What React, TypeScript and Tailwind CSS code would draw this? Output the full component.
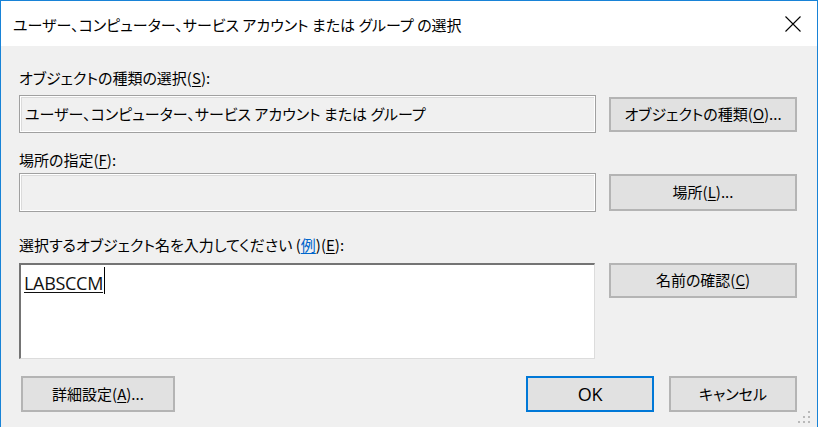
import React from "react";

const font = "font-['Noto_Sans_CJK_JP','Noto_Sans',sans-serif] [font-feature-settings:'palt']";

function Btn({ children, className = "" }: { children: React.ReactNode; className?: string }) {
  return (
    <div
      className={`flex items-center justify-center bg-[#e1e1e1] border-2 border-[#b4b4b4] text-[15px] text-black ${className}`}
    >
      {children}
    </div>
  );
}

function U({ children }: { children: React.ReactNode }) {
  return <span className="underline underline-offset-2">{children}</span>;
}

export default function App() {
  return (
    <div className={`relative w-[818px] h-[427px] flex flex-col border-l border-t border-r border-[#1883d7] bg-[#f0f0f0] overflow-hidden ${font}`}>
      {/* Title bar */}
      <div className="h-[45px] shrink-0 bg-white flex items-center justify-between pl-[12px] pr-[16px]">
        <div className="text-[15px] text-black leading-none pt-[2px]">
          ユーザー、コンピューター、サービス アカウント または グループ の選択
        </div>
        <svg width="16" height="16" viewBox="0 0 16 16" className="mt-[1px]">
          <path d="M0.5 0.5 L15.5 15.5 M15.5 0.5 L0.5 15.5" stroke="#000" strokeWidth="1.1" fill="none" />
        </svg>
      </div>

      {/* Body */}
      <div className="flex flex-col pl-[18px] pr-[20px] pt-[22px] text-[15px] text-black">
        <div className="h-[20px] leading-[20px]">
          オブジェクトの種類の選択(<U>S</U>):
        </div>
        <div className="mt-[7px] flex items-center gap-[13px]">
          <div className="w-[577px] h-[38px] border border-[#a0a0a0] shadow-[inset_0_0_0_1px_#ffffff,inset_1px_1px_0_1px_#dadada] bg-[#f0f0f0] flex items-center pl-[5px]">
            ユーザー、コンピューター、サービス アカウント または グループ
          </div>
          <Btn className="w-[188px] h-[35px]">
            オブジェクトの種類(<U>O</U>)...
          </Btn>
        </div>

        <div className="mt-[17px] h-[20px] leading-[20px]">
          場所の指定(<U>F</U>):
        </div>
        <div className="mt-[3px] flex items-center gap-[13px]">
          <div className="w-[577px] h-[39px] border border-[#a0a0a0] shadow-[inset_0_0_0_1px_#ffffff,inset_1px_1px_0_1px_#dadada] bg-[#f0f0f0]" />
          <Btn className="w-[188px] h-[37px]">
            場所(<U>L</U>)...
          </Btn>
        </div>

        <div className="mt-[23px] h-[20px] leading-[20px]">
          選択するオブジェクト名を入力してください (<span className="text-[#0066cc] underline underline-offset-2">例</span>)(<U>E</U>):
        </div>
        <div className="mt-[8px] flex items-start gap-[14px]">
          <div className="w-[576px] h-[96px] bg-white border-2 border-t-[#747474] border-l-[#747474] border-r-[#dcdcdc] border-b-[#dcdcdc] border-r border-b pl-[3px] pt-[7px]">
            <div className="flex items-end">
              <span className="font-['Open_Sans','Noto_Sans',sans-serif] text-[18px] leading-[22px] underline underline-offset-[2px] decoration-1 tracking-[-0.3px] text-[#111]">
                LABSCCM
              </span>
              <span className="w-px h-[27px] bg-black ml-px -mt-[5px]" />
            </div>
          </div>
          <Btn className="w-[188px] h-[35px]">
            名前の確認(<U>C</U>)
          </Btn>
        </div>

        <div className="mt-[17px] flex items-center">
          <Btn className="ml-[2px] w-[154px] h-[36px]">
            詳細設定(<U>A</U>)...
          </Btn>
          <div className="flex-1" />
          <Btn className="w-[128px] h-[36px] !border-[#0078d7]">
            <span className="font-['Open_Sans','Noto_Sans',sans-serif] text-[18px] tracking-[-0.3px]">OK</span>
          </Btn>
          <Btn className="ml-[15px] w-[128px] h-[36px]">
            キャンセル
          </Btn>
        </div>
      </div>

      {/* size grip */}
      <svg className="absolute right-[5px] bottom-[2px]" width="14" height="14" viewBox="0 0 14 14">
        <rect x="10" y="0" width="2" height="2" fill="#b9b9b9" />
        <rect x="5" y="5" width="2" height="2" fill="#b9b9b9" />
        <rect x="10" y="5" width="2" height="2" fill="#b9b9b9" />
        <rect x="0" y="10" width="2" height="2" fill="#b9b9b9" />
        <rect x="5" y="10" width="2" height="2" fill="#b9b9b9" />
        <rect x="10" y="10" width="2" height="2" fill="#b9b9b9" />
      </svg>
    </div>
  );
}
